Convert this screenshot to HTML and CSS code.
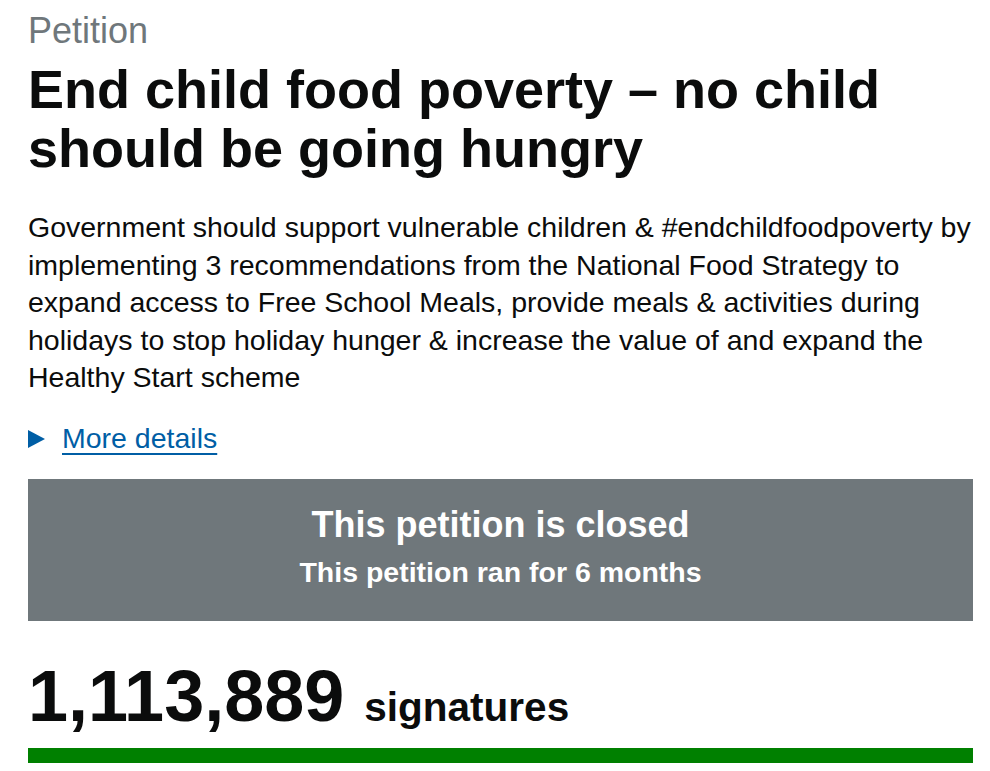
FILE: index.html
```html
<!DOCTYPE html>
<html lang="en">
<head>
<meta charset="utf-8">
<title>End child food poverty – no child should be going hungry - Petitions</title>
<link rel="stylesheet" href="styles.css">
</head>
<body>
<main class="page">
  <span class="caption">Petition</span>
  <h1 class="heading">End child food poverty – no child should be going hungry</h1>
  <p class="lead">Government should support vulnerable children &amp; #endchildfoodpoverty by implementing 3 recommendations from the National Food Strategy to expand access to Free School Meals, provide meals &amp; activities during holidays to stop holiday hunger &amp; increase the value of and expand the Healthy Start scheme</p>
  <details class="details">
    <summary class="details-summary"><span class="details-text">More details</span></summary>
  </details>
  <div class="closed-banner">
    <p class="closed-title">This petition is closed</p>
    <p class="closed-sub">This petition ran for 6 months</p>
  </div>
  <p class="signature-count"><span class="count">1,113,889</span><span class="count-label">signatures</span></p>
  <div class="progress"><div class="progress-bar"></div></div>
</main>
</body>
</html>
```
FILE: styles.css
```css
html, body {
  margin: 0;
  padding: 0;
  background: #ffffff;
}

body {
  font-family: "Liberation Sans", Arial, Helvetica, sans-serif;
  color: #0b0c0c;
}

.page {
  width: 945px;
  padding: 11px 17px 0 28px;
}

.caption {
  display: block;
  font-size: 36px;
  line-height: 40px;
  color: #6f777b;
}

.heading {
  margin: 8.5px 0 0;
  font-size: 54px;
  line-height: 59px;
  font-weight: 700;
}

.lead {
  margin: 31.5px -10px 0 0;
  font-size: 28.5px;
  line-height: 37.5px;
}

.details {
  margin-top: 23px;
  font-size: 28.5px;
  line-height: 37.5px;
}

.details-summary {
  position: relative;
  display: inline-block;
  padding-left: 34px;
  color: #005ea5;
  cursor: pointer;
  list-style: none;
}

.details-summary::-webkit-details-marker {
  display: none;
}

.details-summary::before {
  content: "";
  position: absolute;
  left: 0;
  top: 10px;
  width: 0;
  height: 0;
  border-left: 17px solid #005ea5;
  border-top: 9.5px solid transparent;
  border-bottom: 9.5px solid transparent;
}

.details-text {
  text-decoration: underline;
  text-decoration-thickness: 2px;
  text-underline-offset: 5px;
}

.closed-banner {
  margin-top: 22px;
  background: #6f777b;
  color: #ffffff;
  text-align: center;
  padding: 26px 0 29px;
}

.closed-title {
  margin: 0;
  font-size: 36px;
  line-height: 40px;
  font-weight: 700;
}

.closed-sub {
  margin: 9px 0 0;
  font-size: 28.5px;
  line-height: 37.5px;
  font-weight: 700;
}

.signature-count {
  margin: 35.7px 0 0;
  font-size: 72px;
  line-height: 80px;
  font-weight: 700;
}

.count-label {
  margin-left: 20px;
  font-size: 40.5px;
  line-height: 1;
}

.progress {
  margin-top: 12.3px;
  height: 15px;
  background: #dee0e2;
}

.progress-bar {
  height: 100%;
  width: 100%;
  background: #008000;
}
```
